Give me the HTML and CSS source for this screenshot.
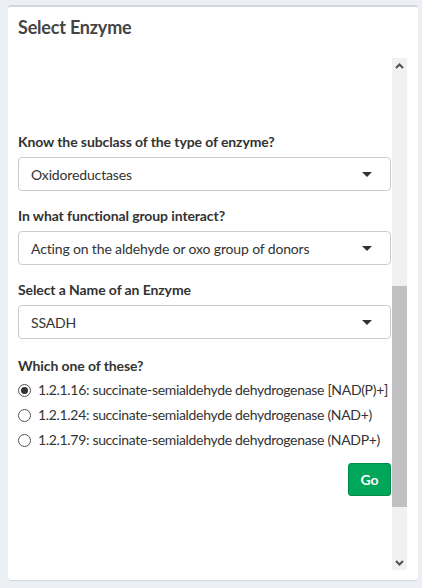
FILE: index.html
```html
<!DOCTYPE html>
<html>
<head>
<meta charset="utf-8">
<link rel="stylesheet" href="styles.css">
</head>
<body>
<div class="box">
  <div class="box-header"><h3 class="box-title">Select Enzyme</h3></div>
  <div class="box-body">
    <div class="scroll-content">
      <div class="form-group">
        <label class="control-label">Know the subclass of the type of enzyme?</label>
        <div class="select"><span>Oxidoreductases</span><span class="caret"></span></div>
      </div>
      <div class="form-group">
        <label class="control-label">In what functional group interact?</label>
        <div class="select"><span>Acting on the aldehyde or oxo group of donors</span><span class="caret"></span></div>
      </div>
      <div class="form-group last-select">
        <label class="control-label">Select a Name of an Enzyme</label>
        <div class="select"><span>SSADH</span><span class="caret"></span></div>
      </div>
      <div class="form-group radios">
        <label class="control-label">Which one of these?</label>
        <label class="radio"><input type="radio" name="ec" checked><span>1.2.1.16: succinate-semialdehyde dehydrogenase [NAD(P)+]</span></label>
        <label class="radio"><input type="radio" name="ec"><span>1.2.1.24: succinate-semialdehyde dehydrogenase (NAD+)</span></label>
        <label class="radio"><input type="radio" name="ec"><span>1.2.1.79: succinate-semialdehyde dehydrogenase (NADP+)</span></label>
      </div>
      <div class="actions"><button class="btn-go">Go</button></div>
    </div>
    <div class="scrollbar">
      <div class="sb-btn"><svg width="9" height="6" viewBox="0 0 9 6"><polyline points="1,5 4.5,1.5 8,5" fill="none" stroke="#505050" stroke-width="2"/></svg></div>
      <div class="sb-track">
        <div class="sb-before"></div>
        <div class="sb-thumb"></div>
        <div class="sb-after"></div>
      </div>
      <div class="sb-btn"><svg width="9" height="6" viewBox="0 0 9 6"><polyline points="1,1 4.5,4.5 8,1" fill="none" stroke="#505050" stroke-width="2"/></svg></div>
    </div>
  </div>
</div>
</body>
</html>
```
FILE: styles.css
```css
html, body {
  margin: 0;
  padding: 0;
}
body {
  background: #ecf0f5;
  font-family: Lato, "Liberation Sans", sans-serif;
  font-size: 14px;
  color: #333;
  padding: 5px 4px 8px 8px;
  width: 410px;
}
.box {
  background: #fff;
  border-top: 2px solid #d2d6de;
  border-radius: 3px;
  box-shadow: 0 1px 1px rgba(0,0,0,0.1);
}
.box-header {
  padding: 10px;
}
.box-title {
  margin: 0;
  font-size: 18px;
  line-height: 20px;
  font-weight: 700;
  color: #444;
  letter-spacing: -0.2px;
}
.box-body {
  display: flex;
  padding: 11px 11px 10px 10px;
  height: 512px;
}
.scroll-content {
  flex: 1;
  padding: 74px 1px 0 0;
}
.form-group {
  margin-bottom: 15px;
}
.form-group.last-select {
  margin-bottom: 17px;
}
.control-label {
  display: block;
  font-weight: 700;
  line-height: 20px;
  margin-bottom: 5px;
  letter-spacing: -0.1px;
}
.select {
  display: flex;
  align-items: center;
  justify-content: space-between;
  height: 34px;
  box-sizing: border-box;
  border: 1px solid #ccc;
  border-radius: 4px;
  padding: 0 18px 0 12px;
  letter-spacing: -0.15px;
}
.caret {
  width: 0;
  height: 0;
  border-top: 5px solid #333;
  border-left: 5px solid transparent;
  border-right: 5px solid transparent;
}
.radios {
  margin-bottom: 0;
}
.radios .control-label {
  margin-bottom: 4px;
}
.radio {
  display: flex;
  align-items: center;
  line-height: 20px;
  margin-bottom: 5px;
  white-space: nowrap;
  letter-spacing: -0.32px;
  cursor: pointer;
}
.radio input {
  appearance: none;
  -webkit-appearance: none;
  margin: 0 7px 0 0;
  width: 13px;
  height: 13px;
  flex: none;
  border: 1px solid #555;
  border-radius: 50%;
  box-sizing: border-box;
  display: grid;
  place-items: center;
  background: #fff;
}
.radio input:checked::after {
  content: "";
  width: 7px;
  height: 7px;
  border-radius: 50%;
  background: #333;
}
.actions {
  display: flex;
  justify-content: flex-end;
  margin-top: 13px;
}
.btn-go {
  font-family: inherit;
  font-size: 14px;
  font-weight: 700;
  color: #fff;
  background: #00a65a;
  border: 1px solid #008d4c;
  border-radius: 3px;
  width: 43px;
  height: 33px;
  padding: 0;
}
.scrollbar {
  width: 15px;
  display: flex;
  flex-direction: column;
  background: #f1f1f1;
}
.sb-btn {
  height: 15px;
  display: flex;
  align-items: center;
  justify-content: center;
}
.sb-track {
  flex: 1;
  display: flex;
  flex-direction: column;
}
.sb-before {
  height: 213px;
}
.sb-thumb {
  height: 221px;
  background: #c1c1c1;
}
.sb-after {
  flex: 1;
}
```
